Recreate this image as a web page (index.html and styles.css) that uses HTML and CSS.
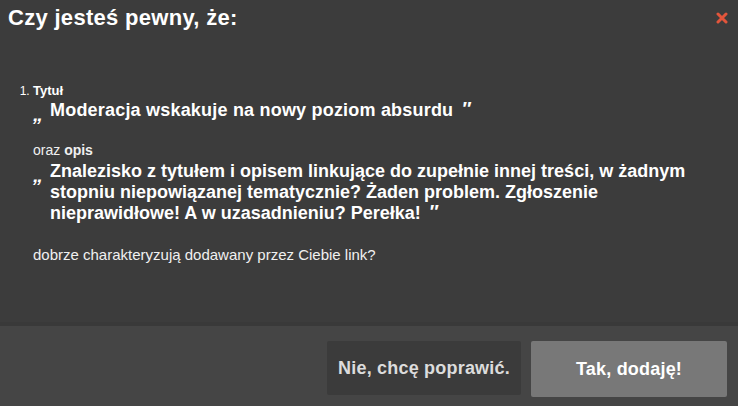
FILE: index.html
```html
<!DOCTYPE html>
<html lang="pl">
<head>
    <meta charset="UTF-8">
    <meta name="viewport" content="width=device-width, initial-scale=1.0">
    <title>Potwierdzenie</title>
    <link rel="stylesheet" href="styles.css">
</head>
<body>

    <div class="dialog">
        <div class="dialog-body">
            <div class="dialog-head">
                <h2>Czy jesteś pewny, że:</h2>
                <svg class="close" width="12" height="12" viewBox="0 0 12 12">
                    <path d="M2 2 L10 10 M10 2 L2 10" stroke="#e2553b" stroke-width="3" stroke-linecap="round"/>
                </svg>
            </div>

            <ol class="items">
                <li>
                    <span class="label">Tytuł</span>
                    <div class="quote title-quote">
                        <span class="q-open">„</span>
                        <p>Moderacja wskakuje na nowy poziom absurdu&nbsp;<span class="q-close">″</span></p>
                    </div>

                    <span class="sub">oraz <b>opis</b></span>
                    <div class="quote">
                        <span class="q-open">„</span>
                        <p>Znalezisko z tytułem i opisem linkujące do zupełnie innej treści, w żadnym stopniu niepowiązanej tematycznie? Żaden problem. Zgłoszenie nieprawidłowe! A w uzasadnieniu? Perełka!&nbsp;<span class="q-close">″</span></p>
                    </div>
                </li>
            </ol>

            <p class="question">dobrze charakteryzują dodawany przez Ciebie link?</p>
        </div>

        <div class="dialog-foot">
            <button class="btn btn-back">Nie, chcę poprawić.</button>
            <button class="btn btn-ok">Tak, dodaję!</button>
        </div>
    </div>

</body>
</html>
```

FILE: styles.css
```css
* {
    box-sizing: border-box;
    margin: 0;
    padding: 0;
}

body {
    font-family: 'Liberation Sans', Arial, sans-serif;
    background: #3c3c3c;
    color: #fff;
    width: 738px;
    height: 406px;
    overflow: hidden;
}

.dialog {
    display: flex;
    flex-direction: column;
    height: 406px;
}

.dialog-body {
    height: 322px;
    padding: 5px 12px 0 8px;
}

.dialog-head {
    display: flex;
    justify-content: space-between;
    align-items: flex-start;
}

h2 {
    font-size: 22px;
    line-height: 25px;
    font-weight: bold;
    letter-spacing: 0.3px;
    color: #fff;
}

.close {
    margin: 7px -2px 0 0;
}

.items {
    margin-top: 53px;
    padding-left: 25px;
    font-size: 12px;
}

.label {
    font-weight: bold;
    font-size: 13px;
    line-height: 15px;
    display: block;
}

.quote {
    display: flex;
    align-items: flex-start;
    font-size: 18px;
    font-weight: bold;
    line-height: 21px;
}

.title-quote {
    letter-spacing: 0.2px;
    margin-top: 2px;
}

.q-open {
    width: 17px;
    flex-shrink: 0;
    font-size: 20px;
    line-height: 21px;
    padding-top: 4px;
    font-style: italic;
}

.quote p {
    flex: 1;
}

.q-close {
    font-size: 19px;
    line-height: 0;
    font-style: italic;
    margin-left: 3px;
    vertical-align: 1px;
}

.sub {
    display: block;
    font-size: 14px;
    line-height: 16px;
    margin: 17px 0 3px;
    color: #f0f0f0;
}

.question {
    margin: 22px 0 0 25px;
    font-size: 15px;
    line-height: 17px;
    color: #f0f0f0;
}

.dialog-foot {
    flex: 1;
    background: #454545;
    border-top: 4px solid #393939;
    display: flex;
    justify-content: flex-end;
    align-items: flex-start;
    gap: 10px;
    padding: 15px 11px 0 0;
}

.btn {
    font-family: 'Liberation Sans', Arial, sans-serif;
    font-size: 18px;
    font-weight: bold;
    letter-spacing: 0.2px;
    border: none;
    border-radius: 2px;
    cursor: pointer;
}

.btn-back {
    background: #3b3b3b;
    color: #dcdcdc;
    width: 194px;
    height: 54px;
}

.btn-ok {
    background: #787878;
    color: #fff;
    width: 196px;
    height: 56px;
}
```
